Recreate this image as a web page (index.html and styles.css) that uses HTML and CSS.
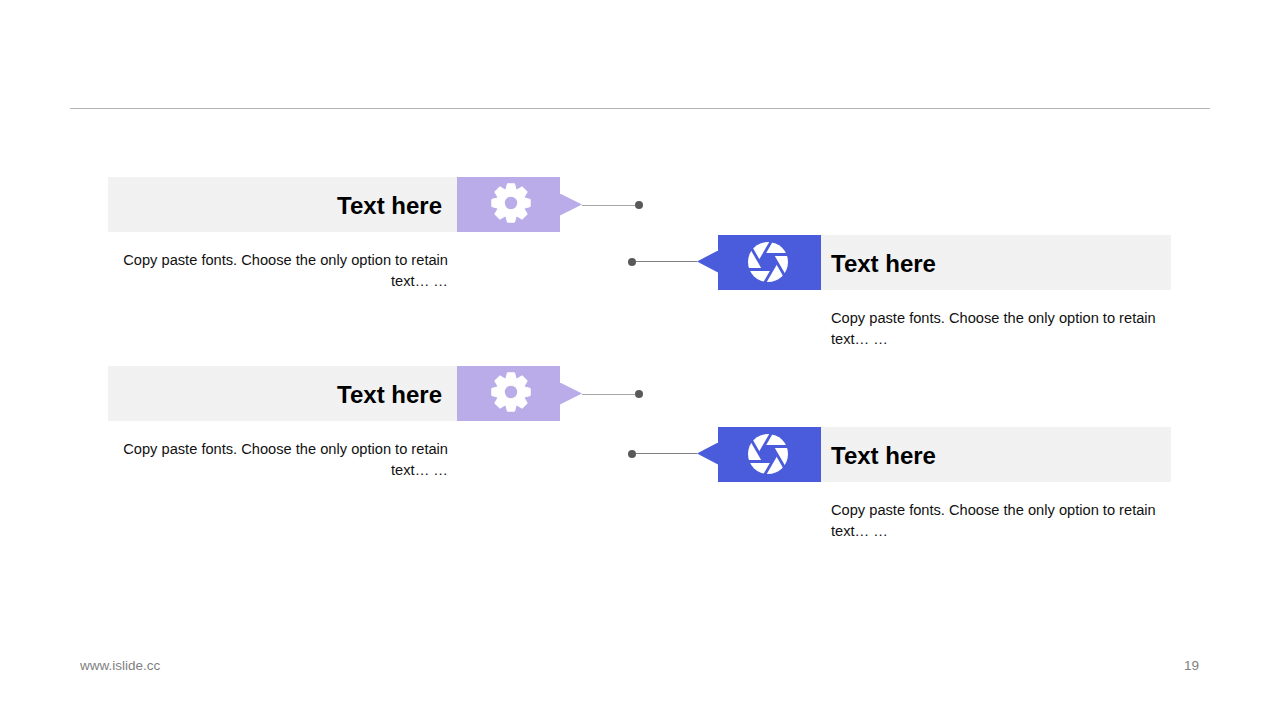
FILE: index.html
```html
<!DOCTYPE html>
<html lang="en">
<head>
<meta charset="utf-8">
<title>Text here</title>
<link rel="stylesheet" href="styles.css">
</head>
<body>
<svg class="defs" aria-hidden="true">
  <symbol id="gear" viewBox="-20 -20 40 40">
    <g class="gear-shape">
      <circle r="14.6"/>
      <polygon points="-5.2,-13 -3.6,-19.2 3.6,-19.2 5.2,-13"/>
      <polygon points="-5.2,-13 -3.6,-19.2 3.6,-19.2 5.2,-13" transform="rotate(45)"/>
      <polygon points="-5.2,-13 -3.6,-19.2 3.6,-19.2 5.2,-13" transform="rotate(90)"/>
      <polygon points="-5.2,-13 -3.6,-19.2 3.6,-19.2 5.2,-13" transform="rotate(135)"/>
      <polygon points="-5.2,-13 -3.6,-19.2 3.6,-19.2 5.2,-13" transform="rotate(180)"/>
      <polygon points="-5.2,-13 -3.6,-19.2 3.6,-19.2 5.2,-13" transform="rotate(225)"/>
      <polygon points="-5.2,-13 -3.6,-19.2 3.6,-19.2 5.2,-13" transform="rotate(270)"/>
      <polygon points="-5.2,-13 -3.6,-19.2 3.6,-19.2 5.2,-13" transform="rotate(315)"/>
    </g>
    <circle class="gear-hole" r="6.2"/>
  </symbol>
  <symbol id="aperture" viewBox="-20 -20 40 40">
    <circle class="ap-disc" r="20"/>
    <polygon class="ap-hole" points="8.66,0 4.33,7.5 -4.33,7.5 -8.66,0 -4.33,-7.5 4.33,-7.5"/>
    <g class="ap-cuts">
      <line x1="-8.66" y1="0" x2="3.46" y2="-21"/>
      <line x1="-8.66" y1="0" x2="3.46" y2="-21" transform="rotate(60)"/>
      <line x1="-8.66" y1="0" x2="3.46" y2="-21" transform="rotate(120)"/>
      <line x1="-8.66" y1="0" x2="3.46" y2="-21" transform="rotate(180)"/>
      <line x1="-8.66" y1="0" x2="3.46" y2="-21" transform="rotate(240)"/>
      <line x1="-8.66" y1="0" x2="3.46" y2="-21" transform="rotate(300)"/>
    </g>
  </symbol>
</svg>
<div class="slide">
  <header class="top"><div class="rule"></div></header>
  <main class="diagram">
    <section class="col col-left">
      <article class="block">
        <div class="row">
          <h2 class="label">Text here</h2>
          <div class="tile tile-lilac"><svg class="icon"><use href="#gear"/></svg></div>
          <div class="tip tip-right"></div>
          <div class="wire wire-light"></div>
          <div class="dot"></div>
        </div>
        <p class="desc">Copy paste fonts. Choose the only option to retain text… …</p>
      </article>
      <article class="block">
        <div class="row">
          <h2 class="label">Text here</h2>
          <div class="tile tile-lilac"><svg class="icon"><use href="#gear"/></svg></div>
          <div class="tip tip-right"></div>
          <div class="wire wire-light"></div>
          <div class="dot"></div>
        </div>
        <p class="desc">Copy paste fonts. Choose the only option to retain text… …</p>
      </article>
    </section>
    <section class="col col-right">
      <article class="block">
        <div class="row">
          <div class="dot"></div>
          <div class="wire wire-dark"></div>
          <div class="tip tip-left"></div>
          <div class="tile tile-blue"><svg class="icon"><use href="#aperture"/></svg></div>
          <h2 class="label">Text here</h2>
        </div>
        <p class="desc">Copy paste fonts. Choose the only option to retain text… …</p>
      </article>
      <article class="block">
        <div class="row">
          <div class="dot"></div>
          <div class="wire wire-dark"></div>
          <div class="tip tip-left"></div>
          <div class="tile tile-blue"><svg class="icon"><use href="#aperture"/></svg></div>
          <h2 class="label">Text here</h2>
        </div>
        <p class="desc">Copy paste fonts. Choose the only option to retain text… …</p>
      </article>
    </section>
  </main>
  <footer class="foot">
    <span>www.islide.cc</span>
    <span>19</span>
  </footer>
</div>
</body>
</html>
```
FILE: styles.css
```css
* { box-sizing: border-box; }
html, body { margin: 0; padding: 0; background: #fff; }
body { font-family: "Liberation Sans", Arial, sans-serif; color: #000; overflow: hidden; }
.defs { position: absolute; width: 0; height: 0; }

.slide { width: 1280px; height: 720px; display: flex; flex-direction: column; }
.top { height: 109px; padding: 0 70px; flex: none; }
.rule { height: 109px; border-bottom: 1px solid #b3b3b3; }

.diagram {
  flex: 1;
  display: grid;
  grid-template-columns: 520px 15px 528px;
  padding-left: 108px;
  align-items: start;
}
.col { grid-row: 1; display: flex; flex-direction: column; }
.col-left { grid-column: 1 / 3; padding-top: 68px; }
.col-right { grid-column: 2 / 4; padding-top: 126px; }
.col-left .block { height: 189px; }
.col-right .block { height: 192px; }

.row { display: flex; align-items: center; height: 55px; }
.label {
  flex: none;
  width: 349px;
  height: 55px;
  margin: 0;
  padding-top: 1px;
  background: repeating-conic-gradient(#f0f0f0 0 25%, #f3f3f3 0 50%) 0 0 / 2px 2px;
  font-size: 24px;
  font-weight: 700;
  line-height: 55px;
}
.col-left .label { text-align: right; padding-right: 15px; }
.col-right .label { width: 350px; padding-left: 10px; }

.tile { flex: none; width: 103px; height: 55px; display: flex; align-items: center; justify-content: center; }
.tile-lilac { background: #b9ace9; --tile: #b9ace9; }
.tile-blue { background: #4a5bdb; --tile: #4a5bdb; }
.icon { width: 40px; height: 40px; }
.tile-lilac .icon { margin: -3px 0 0 5px; }
.tile-blue .icon { margin: 0 0 2px -4px; }
.gear-shape, .ap-disc { fill: #fff; }
.gear-shape polygon { stroke: #fff; stroke-width: 1; stroke-linejoin: round; }
.gear-hole, .ap-hole { fill: var(--tile); }
.ap-cuts line { stroke: var(--tile); stroke-width: 2.8; }

.tip { flex: none; width: 22px; height: 22px; }
.tip-right { background: #b9ace9; clip-path: polygon(0 0, 100% 50%, 0 100%); }
.tip-left { width: 21px; margin-bottom: 2px; background: #4a5bdb; clip-path: polygon(100% 0, 0 50%, 100% 100%); }

.wire { flex: none; height: 1px; }
.col-left .wire, .col-left .dot { margin-top: 1px; }
.col-right .wire, .col-right .dot { margin-bottom: 2px; }
.wire-light { width: 53px; background: #a6a6a6; }
.wire-dark { width: 61px; background: #7f7f7f; }
.dot { flex: none; width: 8px; height: 8px; border-radius: 50%; background: #595959; }

.desc { margin: 18px 0 0; width: 340px; color: #111; font-size: 14.65px; line-height: 21px; }
.col-left .desc { text-align: right; }
.col-right .desc { margin-left: 203px; }

.foot {
  flex: none;
  height: 62px;
  padding: 0 81px 0 80px;
  display: flex;
  justify-content: space-between;
  font-size: 13.5px;
  line-height: 15px;
  color: #7f7f7f;
}
```
